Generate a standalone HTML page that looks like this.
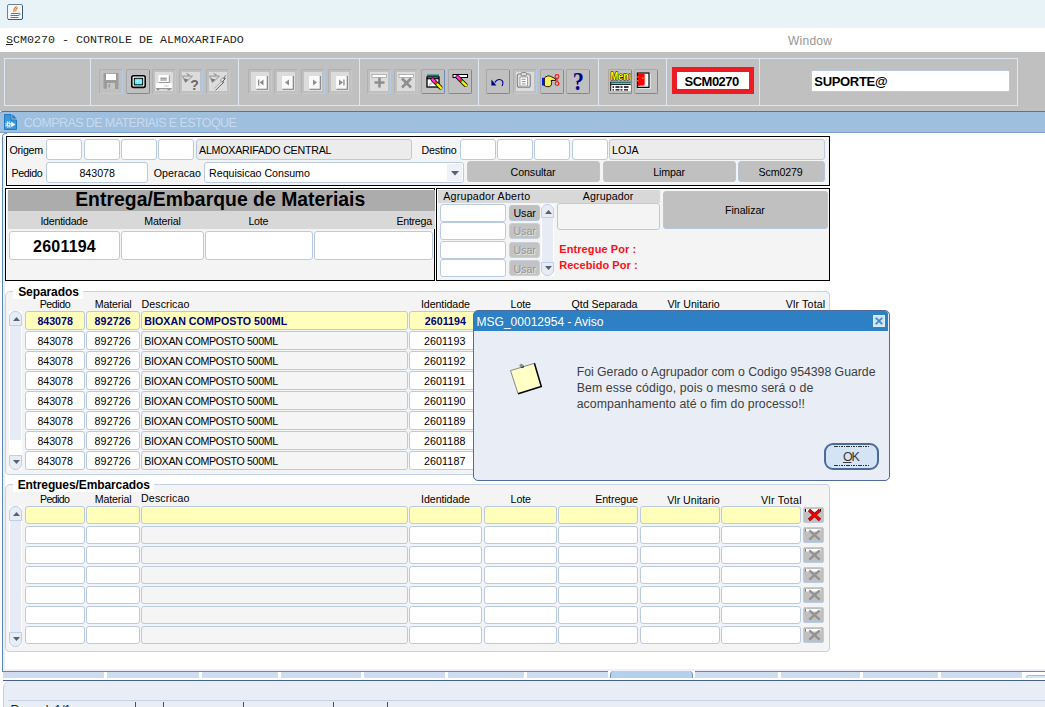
<!DOCTYPE html>
<html><head><meta charset="utf-8"><title>SCM0270 - CONTROLE DE ALMOXARIFADO</title>
<style>
*{box-sizing:border-box;margin:0;padding:0}
html,body{width:1045px;height:707px;overflow:hidden;background:#fff}
body{position:relative;font-family:"Liberation Sans",Arial,sans-serif;font-size:11px;color:#000}
div,span,svg{position:absolute}
.f{background:#fff;border:1px solid #b9cbe3;border-radius:3px}
.fg{background:#ececec;border:1px solid #b9cbe3;border-radius:3px}
.fy{background:#ffffbb;border:1px solid #bccbdc;border-radius:3px}
.btn{background:#c0c0c0;border:1px solid #b4c6de;border-radius:3px}
.tb{width:24px;height:25px;border:1px solid #a8b8d0;border-radius:2px;background:#c0c0c0}
.pnl{border:1px solid #dde7f3;top:58px;height:48px}
</style></head><body>

<div style="left:0px;top:0px;width:1045px;height:28px;background:#e7f3f6"></div>
<svg style="left:7px;top:4px" width="16" height="16" viewBox="0 0 16 16"><rect x="0.500" y="0.500" width="15" height="15" rx="1.500" fill="#f6f7f8" stroke="#6c8298"/><path d="M1 15.500h14M15.500 2v13" stroke="#3c5a78" stroke-width="1" fill="none"/><path d="M4 9.500h7.500M3.500 11.500h8M3.500 13.500h8" stroke="#41679a" stroke-width="0.900" fill="none"/><path d="M9.500 2.500c-2.500 1.800-3 3.500-2.500 5.500M10.500 3.500c-1.800 1.500-2.200 2.500-1.800 4" stroke="#e8761c" stroke-width="1.100" fill="none"/><path d="M11.500 9c2-.3 2 2.300-.3 2.300" stroke="#41679a" stroke-width="0.900" fill="none"/></svg>
<div style="left:0px;top:28px;width:1045px;height:24px;background:#fff"></div>
<div style="left:6px;top:33px;font-family:'Liberation Mono',monospace;font-size:11.67px;line-height:14px;white-space:pre;color:#222"><u>S</u>CM0270 - CONTROLE DE ALMOXARIFADO</div>
<span style="left:788.00px;top:34px;font-size:12px;line-height:15px;letter-spacing:0.256px;white-space:pre;color:#969696;">Window</span>
<div style="left:0px;top:52px;width:1045px;height:59px;background:#c0c0c0"></div>
<div class="pnl" style="left:4px;width:87px"></div>
<div class="pnl" style="left:90px;width:149px"></div>
<div class="pnl" style="left:238px;width:122px"></div>
<div class="pnl" style="left:359px;width:120px"></div>
<div class="pnl" style="left:478px;width:121px"></div>
<div class="pnl" style="left:598px;width:69px"></div>
<div class="pnl" style="left:666px;width:94px"></div>
<div class="pnl" style="left:759px;width:259px"></div>
<div class="tb" style="left:99px;top:69px;border-color:#b0b0b0 #b4ccec #b4ccec #b0b0b0"><svg style="left:-1px;top:-1px" width="24" height="25" viewBox="0 0 24 25"><path d="M4.500 4h15v16H6L4.500 18.500z" fill="#9c9c9c"/><rect x="7" y="5" width="10" height="6" fill="#fff"/><rect x="8" y="14" width="8" height="6" fill="#c6c6c6"/><rect x="9.500" y="15" width="1.600" height="3.500" fill="#9c9c9c"/><path d="M7 4.300h10M7 20h9" stroke="#c0c0c0" stroke-width="0.800" stroke-dasharray="1 1"/></svg></div>
<div class="tb" style="left:126px;top:69px;border-color:#a8a8a8 #6a8cb8 #6a8cb8 #a8a8a8"><svg style="left:-1px;top:-1px" width="24" height="25" viewBox="0 0 24 25"><rect x="5.800" y="6.800" width="13.400" height="11.600" rx="1.800" fill="#fff" stroke="#000" stroke-width="1.600"/><rect x="7.800" y="8.800" width="9.400" height="7.600" fill="#000"/><rect x="8.800" y="9.800" width="7.400" height="5.600" fill="#20e0f0"/><path d="M8.800 11.200h7.400M8.800 12.600h7.400M8.800 14h7.400" stroke="#e8ffff" stroke-width="0.600"/><path d="M10 9.800v5.600M11.500 9.800v5.600M13 9.800v5.600M14.500 9.800v5.600" stroke="#e8ffff" stroke-width="0.500" stroke-dasharray="0.700 0.700"/></svg></div>
<div class="tb" style="left:152px;top:69px;border-color:#b0b0b0 #b4ccec #b4ccec #b0b0b0"><div style="left:2px;top:2px;width:18px;height:19px;background:#dcdcdc"></div><svg style="left:-1px;top:-1px" width="24" height="25" viewBox="0 0 24 25"><rect x="6.500" y="6" width="10.800" height="7.300" fill="#fff"/><path d="M17.300 6.300v7.200H7" stroke="#8e8e8e" stroke-width="0.900" fill="none"/><path d="M8.300 9.200h6.500M8.300 11h6.500" stroke="#6a6a6a" stroke-width="0.900"/><rect x="4" y="14.200" width="15.800" height="5" fill="#fff"/><path d="M4 19.600h15.800" stroke="#8e8e8e" stroke-width="1"/><path d="M12.500 17h4" stroke="#8e8e8e" stroke-width="0.900" stroke-dasharray="1 0.600"/><path d="M5 20.600h2.200M15.500 20.600h2.800" stroke="#8e8e8e" stroke-width="1.100"/></svg></div>
<div class="tb" style="left:179px;top:69px;border-color:#b0b0b0 #b4ccec #b4ccec #b0b0b0"><div style="left:2px;top:2px;width:18px;height:19px;background:#dcdcdc"></div><svg style="left:-1px;top:-1px" width="24" height="25" viewBox="0 0 24 25"><path d="M3.500 7l10 .2-7 6.300z" fill="none" stroke="#8e8e8e" stroke-width="0.900"/><path d="M4.600 9.300l4.600 1.200-2.700 2.800z" fill="#7a7a7a"/><path d="M7.300 4.300l3.800 2M9 5v2" stroke="#8e8e8e" stroke-width="0.900"/><text x="11.300" y="21.300" font-family="Liberation Sans,sans-serif" font-weight="bold" font-size="14" fill="#6a6a6a">?</text></svg></div>
<div class="tb" style="left:206px;top:69px;border-color:#b0b0b0 #b4ccec #b4ccec #b0b0b0"><div style="left:2px;top:2px;width:18px;height:19px;background:#dcdcdc"></div><svg style="left:-1px;top:-1px" width="24" height="25" viewBox="0 0 24 25"><path d="M3.500 7l10 .2-7 6.300z" fill="none" stroke="#8e8e8e" stroke-width="0.900"/><path d="M4.600 9.300l4.600 1.200-2.700 2.800z" fill="#7a7a7a"/><path d="M7.300 4.300l3.800 2M9 5v2" stroke="#8e8e8e" stroke-width="0.900"/><path d="M17 8l-3 4h2l-8 7.500" stroke="#a8a8a8" stroke-width="0.900" fill="none"/><path d="M19.700 6.400l-2.200 3.100h2l-3.500 3.500h2l-8.500 8.400" stroke="#6a6a6a" stroke-width="1" fill="none"/></svg></div>
<div class="tb" style="left:248px;top:69px;border-color:#b0b0b0 #b4ccec #b4ccec #b0b0b0"><div style="left:2px;top:2px;width:18px;height:19px;background:#dcdcdc"></div><svg style="left:-1px;top:-1px" width="24" height="25" viewBox="0 0 24 25"><rect x="8" y="7" width="11" height="13" fill="#fafafa"/><path d="M19.300 7v13.300H8.500" stroke="#7c7c7c" stroke-width="1.100" fill="none"/><rect x="10" y="10.500" width="1.300" height="6" fill="#8e8e8e"/><path d="M15.500 10.500v6l-4-3z" fill="#8e8e8e"/></svg></div>
<div class="tb" style="left:274px;top:69px;border-color:#b0b0b0 #b4ccec #b4ccec #b0b0b0"><div style="left:2px;top:2px;width:18px;height:19px;background:#dcdcdc"></div><svg style="left:-1px;top:-1px" width="24" height="25" viewBox="0 0 24 25"><rect x="8" y="7" width="11" height="13" fill="#fafafa"/><path d="M19.300 7v13.300H8.500" stroke="#7c7c7c" stroke-width="1.100" fill="none"/><path d="M15 10.500v6l-4-3z" fill="#8e8e8e"/></svg></div>
<div class="tb" style="left:301px;top:69px;border-color:#b0b0b0 #b4ccec #b4ccec #b0b0b0"><div style="left:2px;top:2px;width:18px;height:19px;background:#dcdcdc"></div><svg style="left:-1px;top:-1px" width="24" height="25" viewBox="0 0 24 25"><rect x="8" y="7" width="11" height="13" fill="#fafafa"/><path d="M19.300 7v13.300H8.500" stroke="#7c7c7c" stroke-width="1.100" fill="none"/><path d="M12 10.500v6l4-3z" fill="#8e8e8e"/></svg></div>
<div class="tb" style="left:328px;top:69px;border-color:#b0b0b0 #b4ccec #b4ccec #b0b0b0"><div style="left:2px;top:2px;width:18px;height:19px;background:#dcdcdc"></div><svg style="left:-1px;top:-1px" width="24" height="25" viewBox="0 0 24 25"><rect x="8" y="7" width="11" height="13" fill="#fafafa"/><path d="M19.300 7v13.300H8.500" stroke="#7c7c7c" stroke-width="1.100" fill="none"/><path d="M11 10.500v6l4-3z" fill="#8e8e8e"/><rect x="15.300" y="10.500" width="1.300" height="6" fill="#8e8e8e"/></svg></div>
<div class="tb" style="left:367px;top:69px;border-color:#b0b0b0 #b4ccec #b4ccec #b0b0b0"><div style="left:2px;top:2px;width:18px;height:19px;background:#dcdcdc"></div><svg style="left:-1px;top:-1px" width="24" height="25" viewBox="0 0 24 25"><rect x="5" y="5.500" width="14.500" height="3" fill="#fff" stroke="#8e8e8e" stroke-width="0.600"/><path d="M12.500 8.500v10M7.500 13.500h10" stroke="#8e8e8e" stroke-width="2.600"/></svg></div>
<div class="tb" style="left:394px;top:69px;border-color:#b0b0b0 #b4ccec #b4ccec #b0b0b0"><div style="left:2px;top:2px;width:18px;height:19px;background:#dcdcdc"></div><svg style="left:-1px;top:-1px" width="24" height="25" viewBox="0 0 24 25"><rect x="5" y="5.500" width="14.500" height="3" fill="#fff" stroke="#8e8e8e" stroke-width="0.600"/><path d="M8 9.500l9 9M17 9.500l-9 9" stroke="#8e8e8e" stroke-width="2.600"/></svg></div>
<div class="tb" style="left:421px;top:69px;border-color:#a8a8a8 #6a8cb8 #6a8cb8 #a8a8a8"><svg style="left:-1px;top:-1px" width="24" height="25" viewBox="0 0 24 25"><rect x="6" y="5.500" width="12" height="2" fill="#008080"/><rect x="6" y="8" width="12" height="10" fill="#fff" stroke="#000" stroke-width="1.300"/><path d="M6 9.700h12" stroke="#000" stroke-width="1.200"/><path d="M7.500 17.500a4 4 0 0 1 5-4" fill="#c0c0c0" stroke="none"/><g transform="translate(11.5,10.5)"><path d="M0 0l8 8" stroke="#000" stroke-width="4" stroke-linecap="round"/><path d="M0 0l2.200 2.200" stroke="#ff30d0" stroke-width="2.700" stroke-linecap="round"/><path d="M2.400 2.400l1.400 1.400" stroke="#ff2020" stroke-width="2.700"/><path d="M3.800 3.800l1.600 1.600" stroke="#10c010" stroke-width="2.700"/><path d="M5.400 5.400l3 3" stroke="#f8f000" stroke-width="2.700" stroke-linecap="round"/></g></svg></div>
<div class="tb" style="left:448px;top:69px;border-color:#a8a8a8 #6a8cb8 #6a8cb8 #a8a8a8"><svg style="left:-1px;top:-1px" width="24" height="25" viewBox="0 0 24 25"><rect x="5" y="5.500" width="14.500" height="3" fill="#fff" stroke="#000" stroke-width="1"/><g transform="translate(9.5,8)"><path d="M0 0l8 8" stroke="#000" stroke-width="4" stroke-linecap="round"/><path d="M0 0l2.200 2.200" stroke="#ff30d0" stroke-width="2.700" stroke-linecap="round"/><path d="M2.400 2.400l1.400 1.400" stroke="#ff2020" stroke-width="2.700"/><path d="M3.800 3.800l1.600 1.600" stroke="#10c010" stroke-width="2.700"/><path d="M5.400 5.400l3 3" stroke="#f8f000" stroke-width="2.700" stroke-linecap="round"/></g></svg></div>
<div class="tb" style="left:486px;top:69px;border-color:#a8a8a8 #6a8cb8 #6a8cb8 #a8a8a8"><svg style="left:-1px;top:-1px" width="24" height="25" viewBox="0 0 24 25"><path d="M5.400 10.600v5.800h5z" fill="#00008c"/><path d="M8.800 13.400c1.400-2.200 2.800-3 4.600-2.900c2.300.2 3.700 1.800 3.500 3.800c-.1.900-.4 1.700-.9 2.600" stroke="#00008c" stroke-width="1.100" fill="none"/></svg></div>
<div class="tb" style="left:513px;top:69px;border-color:#b0b0b0 #b4ccec #b4ccec #b0b0b0"><div style="left:2px;top:2px;width:18px;height:19px;background:#dcdcdc"></div><svg style="left:-1px;top:-1px" width="24" height="25" viewBox="0 0 24 25"><rect x="4.300" y="5" width="13" height="13.300" rx="2" fill="#e2e2e2" stroke="#808080" stroke-width="1.100"/><rect x="7" y="8" width="7.500" height="9" fill="#fff" stroke="#808080" stroke-width="0.700"/><rect x="8" y="3.600" width="5.500" height="3.200" rx="1.200" fill="#e2e2e2" stroke="#808080" stroke-width="1"/><path d="M8.800 10.300h3.800M8.800 12.600h3.800M8.800 14.900h3.800" stroke="#808080" stroke-width="0.900"/></svg></div>
<div class="tb" style="left:540px;top:69px;border-color:#a8a8a8 #6a8cb8 #6a8cb8 #a8a8a8"><svg style="left:-1px;top:-1px" width="24" height="25" viewBox="0 0 24 25"><rect x="2" y="8.800" width="2.400" height="7.700" fill="#0020e0"/><path d="M4.400 9c2-2 4-2.700 6-1.700l5.200 2.500v1.600l-4.500 .1c1.200 2 .7 5.600-1.800 6.100c-2 .4-3.600-.3-4.900-.9z" fill="#f8ec50" stroke="#000" stroke-width="0.900"/><path d="M6 11h5M6 13h5M6 15h4" stroke="#fff" stroke-width="0.600" stroke-dasharray="0.800 0.800"/><circle cx="17" cy="7.500" r="1.900" fill="none" stroke="#ff1010" stroke-width="1.100"/><circle cx="17" cy="14.600" r="1.900" fill="none" stroke="#ff1010" stroke-width="1.100"/><path d="M16 9.300l1.800 3.500M18 9.300l-1.800 3.500" stroke="#ff1010" stroke-width="0.800"/></svg></div>
<div class="tb" style="left:566px;top:69px;border-color:#a8a8a8 #6a8cb8 #6a8cb8 #a8a8a8"><svg style="left:-1px;top:-1px" width="24" height="25" viewBox="0 0 24 25"><text transform="translate(6.800,21.200) scale(0.860,1)" font-family="Liberation Serif,serif" font-weight="bold" font-size="26" fill="#000088">?</text></svg></div>
<div class="tb" style="left:608px;top:69px;border-color:#a8a8a8 #6a8cb8 #6a8cb8 #a8a8a8"><svg style="left:-1px;top:-1px" width="24" height="25" viewBox="0 0 24 25"><svg x="0" y="0" width="22.700" height="25"><text x="2.400" y="11.200" font-family="Liberation Sans,sans-serif" font-weight="bold" font-size="11" fill="#ffff00" stroke="#000" stroke-width="1.100" paint-order="stroke" textLength="24" lengthAdjust="spacingAndGlyphs">Menu</text><rect x="2.500" y="12.800" width="21" height="0.900" fill="#000"/><rect x="3" y="13.700" width="21" height="1.500" fill="#00e8f8"/><rect x="2.500" y="15.200" width="21" height="0.800" fill="#000"/><rect x="3" y="16" width="21" height="6" fill="#fff"/><rect x="2.300" y="12.800" width="0.900" height="9.200" fill="#000"/><path d="M4.500 18h1.500M7.500 18h4M12.500 18h2M16 18h4.500M4.500 20.800h1.500M7.500 20.800h4M12.500 20.800h2M16 20.800h4" stroke="#000" stroke-width="1.300"/></svg></svg></div>
<div class="tb" style="left:634px;top:69px;border-color:#a8a8a8 #6a8cb8 #6a8cb8 #a8a8a8"><svg style="left:-1px;top:-1px" width="24" height="25" viewBox="0 0 24 25"><rect x="3.800" y="18.600" width="12.600" height="1" fill="#fff"/><rect x="15.500" y="4.500" width="1" height="15" fill="#fff"/><rect x="3.400" y="4" width="11.600" height="14.400" fill="#d8d8d8" stroke="#000" stroke-width="1.100"/><rect x="11.500" y="5" width="2.500" height="11.500" fill="#fff"/><path d="M4 4.600h6.600v10.600l-1.200 1.200h-3.500l-0.600 0.600h-1.300z" fill="#ff0000"/><rect x="8.200" y="8.500" width="1.300" height="1.300" fill="#ffe800"/><path d="M3 8h1.300M3 11.800h1.300" stroke="#ffe800" stroke-width="0.900"/></svg></div>
<div style="left:672px;top:67px;width:82px;height:27px;background:#fff;border:5px solid #ed1c24"></div>
<span style="left:684.60px;top:74px;font-size:13px;line-height:16px;letter-spacing:-0.531px;white-space:pre;font-weight:bold;">SCM0270</span>
<div class="f" style="left:811px;top:70px;width:199px;height:22px;border-color:#b9cbe3;border-radius:2px"></div>
<span style="left:814.30px;top:74px;font-size:13px;line-height:16px;letter-spacing:-0.319px;white-space:pre;font-weight:bold;">SUPORTE@</span>
<div style="left:0px;top:111px;width:1045px;height:22px;background:#9fbfdf;border-top:1px solid #4f74a6;border-bottom:1px solid #7d9fca;border-top-left-radius:3px"></div>
<svg style="left:4px;top:114px" width="13" height="16" viewBox="0 0 13 16"><path d="M0.500 0.500h6.500v5.500h5.500v9.500h-12z" fill="#3a97da" stroke="#1f7bc0"/><path d="M8.300 0.300v4.200h4.400z" fill="#1f7bc0"/><circle cx="4.500" cy="10.500" r="2.700" fill="none" stroke="#fff" stroke-width="1.300" stroke-dasharray="1.100 1.020"/><circle cx="4.500" cy="10.500" r="1.900" fill="#fff"/><circle cx="4.700" cy="10.500" r="0.900" fill="#3a97da"/><path d="M7.300 7.800l4 2.700-4 2.700z" fill="#fff"/></svg>
<span style="left:23.85px;top:115px;font-size:12.5px;line-height:16px;letter-spacing:-0.592px;white-space:pre;color:#c6daef;">COMPRAS DE MATERIAIS E ESTOQUE</span>
<div style="left:2px;top:133px;width:5px;height:5px;border:1px solid #6f92c2;border-right:0;border-bottom:0;border-radius:4px 0 0 0"></div>
<div style="left:2px;top:137px;width:1px;height:535px;background:#5f86b8"></div>
<div style="left:3px;top:135px;width:2px;height:534px;background:#e9eff7"></div>
<div style="left:6px;top:136px;width:824px;height:50px;background:#f4f4f4;border:1px solid #000;box-shadow:inset 1px 1px 0 #fff"></div>
<span style="left:9.40px;top:144px;font-size:10.67px;line-height:13px;letter-spacing:-0.240px;white-space:pre;">Origem</span>
<div class="f" style="left:46px;top:139px;width:36px;height:21px;"></div>
<div class="f" style="left:84px;top:139px;width:36px;height:21px;"></div>
<div class="f" style="left:121px;top:139px;width:36px;height:21px;"></div>
<div class="f" style="left:158px;top:139px;width:36px;height:21px;"></div>
<div class="fg" style="left:196px;top:139px;width:216px;height:21px;"></div>
<span style="left:199.00px;top:144px;font-size:10.67px;line-height:13px;letter-spacing:-0.224px;white-space:pre;">ALMOXARIFADO CENTRAL</span>
<span style="left:421.50px;top:144px;font-size:10.67px;line-height:13px;letter-spacing:-0.179px;white-space:pre;">Destino</span>
<div class="f" style="left:460px;top:139px;width:36px;height:21px;"></div>
<div class="f" style="left:497px;top:139px;width:36px;height:21px;"></div>
<div class="f" style="left:534px;top:139px;width:36px;height:21px;"></div>
<div class="f" style="left:572px;top:139px;width:36px;height:21px;"></div>
<div class="fg" style="left:609px;top:139px;width:216px;height:21px;"></div>
<span style="left:612.00px;top:144px;font-size:10.67px;line-height:13px;letter-spacing:-0.043px;white-space:pre;">LOJA</span>
<span style="left:11.50px;top:167px;font-size:10.67px;line-height:13px;letter-spacing:-0.387px;white-space:pre;">Pedido</span>
<div class="f" style="left:46px;top:162px;width:102px;height:21px;"></div>
<span style="left:79.40px;top:167px;font-size:10.67px;line-height:13px;letter-spacing:0.003px;white-space:pre;">843078</span>
<span style="left:153.70px;top:167px;font-size:10.67px;line-height:13px;letter-spacing:0.066px;white-space:pre;">Operacao</span>
<div class="f" style="left:204px;top:162px;width:260px;height:21px;"><div style="right:1px;top:1px;width:15px;height:17px;background:#eef1f8"></div><svg style="right:4px;top:8px" width="8" height="5"><path d="M0 0h8l-4 4.500z" fill="#5a5f73"/></svg></div>
<span style="left:209.10px;top:167px;font-size:10.67px;line-height:13px;letter-spacing:-0.030px;white-space:pre;">Requisicao Consumo</span>
<div class="btn" style="left:467px;top:161px;width:133px;height:21px;"></div>
<span style="left:510.50px;top:166px;font-size:10.67px;line-height:13px;letter-spacing:-0.058px;white-space:pre;">Consultar</span>
<div class="btn" style="left:603px;top:161px;width:133px;height:21px;"></div>
<span style="left:653.30px;top:166px;font-size:10.67px;line-height:13px;letter-spacing:-0.179px;white-space:pre;">Limpar</span>
<div class="btn" style="left:738px;top:161px;width:87px;height:21px;"></div>
<span style="left:758.50px;top:166px;font-size:10.67px;line-height:13px;letter-spacing:-0.130px;white-space:pre;">Scm0279</span>
<div style="left:5px;top:188px;width:430px;height:93px;background:#f4f4f4;border:1px solid #000;box-shadow:inset 1px 1px 0 #fff"></div>
<div style="left:8px;top:190px;width:427px;height:21px;background:#acacac"></div>
<div style="left:8px;top:211px;width:427px;height:18px;background:#d8d8d8"></div>
<span style="left:75.20px;top:188px;font-size:19.33px;line-height:24px;letter-spacing:0.040px;white-space:pre;font-weight:bold;">Entrega/Embarque de Materiais</span>
<span style="left:40.40px;top:215px;font-size:10.67px;line-height:13px;letter-spacing:-0.248px;white-space:pre;">Identidade</span>
<span style="left:144.20px;top:215px;font-size:10.67px;line-height:13px;letter-spacing:-0.162px;white-space:pre;">Material</span>
<span style="left:248.40px;top:215px;font-size:10.67px;line-height:13px;letter-spacing:-0.251px;white-space:pre;">Lote</span>
<span style="left:396.40px;top:215px;font-size:10.67px;line-height:13px;letter-spacing:-0.266px;white-space:pre;">Entrega</span>
<div class="f" style="left:9px;top:231px;width:111px;height:29px;"></div>
<span style="left:33.10px;top:237px;font-size:16px;line-height:20px;letter-spacing:0.210px;white-space:pre;font-weight:bold;">2601194</span>
<div class="f" style="left:121px;top:231px;width:83px;height:29px;"></div>
<div class="f" style="left:205px;top:231px;width:108px;height:29px;"></div>
<div class="f" style="left:314px;top:231px;width:119px;height:29px;"></div>
<div style="left:436px;top:188px;width:394px;height:93px;background:#f4f4f4;border:1px solid #000;box-shadow:inset 1px 1px 0 #fff"></div>
<div style="left:438px;top:190px;width:222px;height:13px;background:#d8d8d8"></div>
<span style="left:443.30px;top:190px;font-size:10.67px;line-height:13px;letter-spacing:0.216px;white-space:pre;">Agrupador Aberto</span>
<span style="left:582.80px;top:190px;font-size:10.67px;line-height:13px;letter-spacing:0.096px;white-space:pre;">Agrupador</span>
<div class="f" style="left:440px;top:204px;width:66px;height:18px;"></div>
<div class="btn" style="left:509px;top:205px;width:31px;height:16px;background:#c0c0c0"></div>
<span style="left:513.50px;top:207px;font-size:10.67px;line-height:13px;letter-spacing:-0.071px;white-space:pre;">Usar</span>
<div class="f" style="left:440px;top:222px;width:66px;height:18px;"></div>
<div class="btn" style="left:509px;top:223px;width:31px;height:16px;background:#c3c3c3;border-color:#c6d0de"></div>
<span style="left:513.50px;top:225px;font-size:10.67px;line-height:13px;letter-spacing:-0.071px;white-space:pre;color:#969696;text-shadow:1px 1px 0 #e6e6e6;">Usar</span>
<div class="f" style="left:440px;top:241px;width:66px;height:18px;"></div>
<div class="btn" style="left:509px;top:242px;width:31px;height:16px;background:#c3c3c3;border-color:#c6d0de"></div>
<span style="left:513.50px;top:244px;font-size:10.67px;line-height:13px;letter-spacing:-0.071px;white-space:pre;color:#969696;text-shadow:1px 1px 0 #e6e6e6;">Usar</span>
<div class="f" style="left:440px;top:259px;width:66px;height:18px;"></div>
<div class="btn" style="left:509px;top:260px;width:31px;height:16px;background:#c3c3c3;border-color:#c6d0de"></div>
<span style="left:513.50px;top:263px;font-size:10.67px;line-height:13px;letter-spacing:-0.071px;white-space:pre;color:#969696;text-shadow:1px 1px 0 #e6e6e6;">Usar</span>
<div style="left:541px;top:204px;width:13px;height:72px;background:#fff"></div><div style="left:542px;top:218px;width:11px;height:44px;background:#e6ebf5"></div><div style="left:541px;top:204px;width:13px;height:14px;background:#e8ecf5;border:1px solid #bfcfe7;border-radius:6px 6px 0 0"></div><div style="left:541px;top:262px;width:13px;height:14px;background:#e8ecf5;border:1px solid #bfcfe7;border-radius:0 0 6px 6px"></div><svg style="left:544.5px;top:210px" width="7" height="4"><path d="M0 4h7l-3.500-4z" fill="#5a5f73"/></svg><svg style="left:544.5px;top:266px" width="7" height="4"><path d="M0 0h7l-3.500 4z" fill="#5a5f73"/></svg>
<div class="f" style="left:557px;top:203px;width:103px;height:27px;background:#f4f4f4"></div>
<div class="btn" style="left:663px;top:191px;width:165px;height:38px;"></div>
<span style="left:725.10px;top:204px;font-size:10.67px;line-height:13px;letter-spacing:-0.067px;white-space:pre;">Finalizar</span>
<span style="left:559.20px;top:242px;font-size:11px;line-height:14px;letter-spacing:0.101px;white-space:pre;font-weight:bold;color:#fa0f19;">Entregue Por :</span>
<span style="left:559.20px;top:258px;font-size:11px;line-height:14px;letter-spacing:0.061px;white-space:pre;font-weight:bold;color:#fa0f19;">Recebido Por :</span>
<div style="left:5px;top:291px;width:825px;height:184px;border:1px solid #c3d2e8;border-radius:5px 4px 4px 4px;background:#f4f4f4"></div><div style="left:13px;top:286px;width:70px;height:13px;background:#fff"></div>
<span style="left:18.20px;top:285px;font-size:12px;line-height:15px;letter-spacing:-0.085px;white-space:pre;font-weight:bold;">Separados</span>
<div style="left:9px;top:311px;width:13px;height:159px;background:#fff"></div><div style="left:10px;top:326px;width:11px;height:114px;background:#e6ebf5"></div><div style="left:9px;top:311px;width:13px;height:15px;background:#e8ecf5;border:1px solid #bfcfe7;border-radius:6px 6px 0 0"></div><div style="left:9px;top:455px;width:13px;height:15px;background:#e8ecf5;border:1px solid #bfcfe7;border-radius:0 0 6px 6px"></div><svg style="left:12.5px;top:317px" width="7" height="4"><path d="M0 4h7l-3.500-4z" fill="#5a5f73"/></svg><svg style="left:12.5px;top:460px" width="7" height="4"><path d="M0 0h7l-3.500 4z" fill="#5a5f73"/></svg>
<span style="left:39.70px;top:298px;font-size:10.67px;line-height:13px;letter-spacing:-0.427px;white-space:pre;">Pedido</span>
<span style="left:94.70px;top:298px;font-size:10.67px;line-height:13px;letter-spacing:-0.147px;white-space:pre;">Material</span>
<span style="left:141.50px;top:298px;font-size:10.67px;line-height:13px;letter-spacing:0.071px;white-space:pre;">Descricao</span>
<span style="left:421.00px;top:298px;font-size:10.67px;line-height:13px;letter-spacing:-0.092px;white-space:pre;">Identidade</span>
<span style="left:510.60px;top:298px;font-size:10.67px;line-height:13px;letter-spacing:-0.118px;white-space:pre;">Lote</span>
<span style="left:571.60px;top:298px;font-size:10.67px;line-height:13px;letter-spacing:-0.043px;white-space:pre;">Qtd Separada</span>
<span style="left:667.40px;top:298px;font-size:10.67px;line-height:13px;letter-spacing:-0.033px;white-space:pre;">Vlr Unitario</span>
<span style="left:785.70px;top:298px;font-size:10.67px;line-height:13px;letter-spacing:0.155px;white-space:pre;">Vlr Total</span>
<div class="fy" style="left:25px;top:311px;width:60px;height:19px;"></div>
<div class="fy" style="left:86px;top:311px;width:54px;height:19px;"></div>
<div class="fy" style="left:141px;top:311px;width:267px;height:19px;"></div>
<div class="fy" style="left:409px;top:311px;width:73px;height:19px;"></div>
<div class="fy" style="left:484px;top:311px;width:73px;height:19px;"></div>
<div class="fy" style="left:558px;top:311px;width:80px;height:19px;"></div>
<div class="fy" style="left:640px;top:311px;width:80px;height:19px;"></div>
<div class="fy" style="left:721px;top:311px;width:104px;height:19px;"></div>
<span style="left:37.40px;top:315px;font-size:10.67px;line-height:13px;letter-spacing:-0.017px;white-space:pre;font-weight:bold;color:#00007a;">843078</span>
<span style="left:94.60px;top:315px;font-size:10.67px;line-height:13px;letter-spacing:0.103px;white-space:pre;font-weight:bold;color:#00007a;">892726</span>
<span style="left:144.30px;top:315px;font-size:10.67px;line-height:13px;letter-spacing:0.024px;white-space:pre;font-weight:bold;color:#00007a;">BIOXAN COMPOSTO 500ML</span>
<span style="left:424.80px;top:315px;font-size:10.67px;line-height:13px;letter-spacing:0.021px;white-space:pre;font-weight:bold;color:#00007a;">2601194</span>
<div class="f" style="left:25px;top:331px;width:60px;height:19px;"></div>
<div class="f" style="left:86px;top:331px;width:54px;height:19px;"></div>
<div class="fg" style="left:141px;top:331px;width:267px;height:19px;background:#f5f5f5"></div>
<div class="f" style="left:409px;top:331px;width:73px;height:19px;"></div>
<div class="f" style="left:484px;top:331px;width:73px;height:19px;"></div>
<div class="f" style="left:558px;top:331px;width:80px;height:19px;"></div>
<div class="f" style="left:640px;top:331px;width:80px;height:19px;"></div>
<div class="f" style="left:721px;top:331px;width:104px;height:19px;"></div>
<span style="left:37.40px;top:335px;font-size:10.67px;line-height:13px;letter-spacing:-0.017px;white-space:pre;">843078</span>
<span style="left:94.60px;top:335px;font-size:10.67px;line-height:13px;letter-spacing:0.103px;white-space:pre;">892726</span>
<span style="left:144.30px;top:335px;font-size:10.67px;line-height:13px;letter-spacing:-0.343px;white-space:pre;">BIOXAN COMPOSTO 500ML</span>
<span style="left:424.00px;top:335px;font-size:10.67px;line-height:13px;letter-spacing:0.107px;white-space:pre;">2601193</span>
<div class="f" style="left:25px;top:351px;width:60px;height:19px;"></div>
<div class="f" style="left:86px;top:351px;width:54px;height:19px;"></div>
<div class="fg" style="left:141px;top:351px;width:267px;height:19px;background:#f5f5f5"></div>
<div class="f" style="left:409px;top:351px;width:73px;height:19px;"></div>
<div class="f" style="left:484px;top:351px;width:73px;height:19px;"></div>
<div class="f" style="left:558px;top:351px;width:80px;height:19px;"></div>
<div class="f" style="left:640px;top:351px;width:80px;height:19px;"></div>
<div class="f" style="left:721px;top:351px;width:104px;height:19px;"></div>
<span style="left:37.40px;top:355px;font-size:10.67px;line-height:13px;letter-spacing:-0.017px;white-space:pre;">843078</span>
<span style="left:94.60px;top:355px;font-size:10.67px;line-height:13px;letter-spacing:0.103px;white-space:pre;">892726</span>
<span style="left:144.30px;top:355px;font-size:10.67px;line-height:13px;letter-spacing:-0.343px;white-space:pre;">BIOXAN COMPOSTO 500ML</span>
<span style="left:424.00px;top:355px;font-size:10.67px;line-height:13px;letter-spacing:0.107px;white-space:pre;">2601192</span>
<div class="f" style="left:25px;top:371px;width:60px;height:19px;"></div>
<div class="f" style="left:86px;top:371px;width:54px;height:19px;"></div>
<div class="fg" style="left:141px;top:371px;width:267px;height:19px;background:#f5f5f5"></div>
<div class="f" style="left:409px;top:371px;width:73px;height:19px;"></div>
<div class="f" style="left:484px;top:371px;width:73px;height:19px;"></div>
<div class="f" style="left:558px;top:371px;width:80px;height:19px;"></div>
<div class="f" style="left:640px;top:371px;width:80px;height:19px;"></div>
<div class="f" style="left:721px;top:371px;width:104px;height:19px;"></div>
<span style="left:37.40px;top:375px;font-size:10.67px;line-height:13px;letter-spacing:-0.017px;white-space:pre;">843078</span>
<span style="left:94.60px;top:375px;font-size:10.67px;line-height:13px;letter-spacing:0.103px;white-space:pre;">892726</span>
<span style="left:144.30px;top:375px;font-size:10.67px;line-height:13px;letter-spacing:-0.343px;white-space:pre;">BIOXAN COMPOSTO 500ML</span>
<span style="left:424.00px;top:375px;font-size:10.67px;line-height:13px;letter-spacing:0.107px;white-space:pre;">2601191</span>
<div class="f" style="left:25px;top:391px;width:60px;height:19px;"></div>
<div class="f" style="left:86px;top:391px;width:54px;height:19px;"></div>
<div class="fg" style="left:141px;top:391px;width:267px;height:19px;background:#f5f5f5"></div>
<div class="f" style="left:409px;top:391px;width:73px;height:19px;"></div>
<div class="f" style="left:484px;top:391px;width:73px;height:19px;"></div>
<div class="f" style="left:558px;top:391px;width:80px;height:19px;"></div>
<div class="f" style="left:640px;top:391px;width:80px;height:19px;"></div>
<div class="f" style="left:721px;top:391px;width:104px;height:19px;"></div>
<span style="left:37.40px;top:395px;font-size:10.67px;line-height:13px;letter-spacing:-0.017px;white-space:pre;">843078</span>
<span style="left:94.60px;top:395px;font-size:10.67px;line-height:13px;letter-spacing:0.103px;white-space:pre;">892726</span>
<span style="left:144.30px;top:395px;font-size:10.67px;line-height:13px;letter-spacing:-0.343px;white-space:pre;">BIOXAN COMPOSTO 500ML</span>
<span style="left:424.00px;top:395px;font-size:10.67px;line-height:13px;letter-spacing:0.107px;white-space:pre;">2601190</span>
<div class="f" style="left:25px;top:411px;width:60px;height:19px;"></div>
<div class="f" style="left:86px;top:411px;width:54px;height:19px;"></div>
<div class="fg" style="left:141px;top:411px;width:267px;height:19px;background:#f5f5f5"></div>
<div class="f" style="left:409px;top:411px;width:73px;height:19px;"></div>
<div class="f" style="left:484px;top:411px;width:73px;height:19px;"></div>
<div class="f" style="left:558px;top:411px;width:80px;height:19px;"></div>
<div class="f" style="left:640px;top:411px;width:80px;height:19px;"></div>
<div class="f" style="left:721px;top:411px;width:104px;height:19px;"></div>
<span style="left:37.40px;top:415px;font-size:10.67px;line-height:13px;letter-spacing:-0.017px;white-space:pre;">843078</span>
<span style="left:94.60px;top:415px;font-size:10.67px;line-height:13px;letter-spacing:0.103px;white-space:pre;">892726</span>
<span style="left:144.30px;top:415px;font-size:10.67px;line-height:13px;letter-spacing:-0.343px;white-space:pre;">BIOXAN COMPOSTO 500ML</span>
<span style="left:424.00px;top:415px;font-size:10.67px;line-height:13px;letter-spacing:0.107px;white-space:pre;">2601189</span>
<div class="f" style="left:25px;top:431px;width:60px;height:19px;"></div>
<div class="f" style="left:86px;top:431px;width:54px;height:19px;"></div>
<div class="fg" style="left:141px;top:431px;width:267px;height:19px;background:#f5f5f5"></div>
<div class="f" style="left:409px;top:431px;width:73px;height:19px;"></div>
<div class="f" style="left:484px;top:431px;width:73px;height:19px;"></div>
<div class="f" style="left:558px;top:431px;width:80px;height:19px;"></div>
<div class="f" style="left:640px;top:431px;width:80px;height:19px;"></div>
<div class="f" style="left:721px;top:431px;width:104px;height:19px;"></div>
<span style="left:37.40px;top:435px;font-size:10.67px;line-height:13px;letter-spacing:-0.017px;white-space:pre;">843078</span>
<span style="left:94.60px;top:435px;font-size:10.67px;line-height:13px;letter-spacing:0.103px;white-space:pre;">892726</span>
<span style="left:144.30px;top:435px;font-size:10.67px;line-height:13px;letter-spacing:-0.343px;white-space:pre;">BIOXAN COMPOSTO 500ML</span>
<span style="left:424.00px;top:435px;font-size:10.67px;line-height:13px;letter-spacing:0.107px;white-space:pre;">2601188</span>
<div class="f" style="left:25px;top:451px;width:60px;height:19px;"></div>
<div class="f" style="left:86px;top:451px;width:54px;height:19px;"></div>
<div class="fg" style="left:141px;top:451px;width:267px;height:19px;background:#f5f5f5"></div>
<div class="f" style="left:409px;top:451px;width:73px;height:19px;"></div>
<div class="f" style="left:484px;top:451px;width:73px;height:19px;"></div>
<div class="f" style="left:558px;top:451px;width:80px;height:19px;"></div>
<div class="f" style="left:640px;top:451px;width:80px;height:19px;"></div>
<div class="f" style="left:721px;top:451px;width:104px;height:19px;"></div>
<span style="left:37.40px;top:455px;font-size:10.67px;line-height:13px;letter-spacing:-0.017px;white-space:pre;">843078</span>
<span style="left:94.60px;top:455px;font-size:10.67px;line-height:13px;letter-spacing:0.103px;white-space:pre;">892726</span>
<span style="left:144.30px;top:455px;font-size:10.67px;line-height:13px;letter-spacing:-0.343px;white-space:pre;">BIOXAN COMPOSTO 500ML</span>
<span style="left:424.00px;top:455px;font-size:10.67px;line-height:13px;letter-spacing:0.107px;white-space:pre;">2601187</span>
<div style="left:5px;top:484px;width:825px;height:168px;border:1px solid #c3d2e8;border-radius:5px 4px 4px 4px;background:#f4f4f4"></div><div style="left:13px;top:479px;width:141px;height:13px;background:#fff"></div>
<span style="left:17.70px;top:478px;font-size:12px;line-height:15px;letter-spacing:-0.097px;white-space:pre;font-weight:bold;">Entregues/Embarcados</span>
<div style="left:9px;top:506px;width:13px;height:141px;background:#fff"></div><div style="left:10px;top:521px;width:11px;height:111px;background:#e6ebf5"></div><div style="left:9px;top:506px;width:13px;height:15px;background:#e8ecf5;border:1px solid #bfcfe7;border-radius:6px 6px 0 0"></div><div style="left:9px;top:632px;width:13px;height:15px;background:#e8ecf5;border:1px solid #bfcfe7;border-radius:0 0 6px 6px"></div><svg style="left:12.5px;top:512px" width="7" height="4"><path d="M0 4h7l-3.500-4z" fill="#5a5f73"/></svg><svg style="left:12.5px;top:637px" width="7" height="4"><path d="M0 0h7l-3.500 4z" fill="#5a5f73"/></svg>
<span style="left:40.00px;top:493px;font-size:10.67px;line-height:13px;letter-spacing:-0.627px;white-space:pre;">Pedido</span>
<span style="left:94.70px;top:493px;font-size:10.67px;line-height:13px;letter-spacing:-0.147px;white-space:pre;">Material</span>
<span style="left:141.00px;top:492px;font-size:10.67px;line-height:13px;letter-spacing:0.134px;white-space:pre;">Descricao</span>
<span style="left:421.10px;top:493px;font-size:10.67px;line-height:13px;letter-spacing:-0.092px;white-space:pre;">Identidade</span>
<span style="left:510.60px;top:493px;font-size:10.67px;line-height:13px;letter-spacing:-0.118px;white-space:pre;">Lote</span>
<span style="left:595.20px;top:493px;font-size:10.67px;line-height:13px;letter-spacing:-0.074px;white-space:pre;">Entregue</span>
<span style="left:667.20px;top:494px;font-size:10.67px;line-height:13px;letter-spacing:-0.015px;white-space:pre;">Vlr Unitario</span>
<span style="left:760.90px;top:494px;font-size:10.67px;line-height:13px;letter-spacing:0.293px;white-space:pre;">Vlr Total</span>
<div class="fy" style="left:25px;top:506px;width:60px;height:18px;"></div>
<div class="fy" style="left:86px;top:506px;width:54px;height:18px;"></div>
<div class="fy" style="left:141px;top:506px;width:267px;height:18px;"></div>
<div class="fy" style="left:409px;top:506px;width:73px;height:18px;"></div>
<div class="fy" style="left:484px;top:506px;width:73px;height:18px;"></div>
<div class="fy" style="left:558px;top:506px;width:80px;height:18px;"></div>
<div class="fy" style="left:640px;top:506px;width:80px;height:18px;"></div>
<div class="fy" style="left:721px;top:506px;width:80px;height:18px;"></div>
<div style="left:803px;top:507px;width:21px;height:16px;background:#c0c0c0;border:1px solid #b9cbe6;border-radius:2px"><svg style="left:0;top:0" width="19" height="14" viewBox="0 0 19 14"><rect x="1" y="1" width="15.500" height="2.500" fill="#fff"/><path d="M1.500 1v2.800M16.500 1v2" stroke="#000" stroke-width="1"/><path d="M5 2l11 10M16 2l-11 10" stroke="#800000" stroke-width="3.200"/><path d="M5.300 2.300l10.400 9.400M15.700 2.300l-10.400 9.400" stroke="#f00000" stroke-width="2.300"/></svg></div>
<div class="f" style="left:25px;top:526px;width:60px;height:18px;"></div>
<div class="f" style="left:86px;top:526px;width:54px;height:18px;"></div>
<div class="fg" style="left:141px;top:526px;width:267px;height:18px;background:#f5f5f5"></div>
<div class="f" style="left:409px;top:526px;width:73px;height:18px;"></div>
<div class="f" style="left:484px;top:526px;width:73px;height:18px;"></div>
<div class="f" style="left:558px;top:526px;width:80px;height:18px;"></div>
<div class="f" style="left:640px;top:526px;width:80px;height:18px;"></div>
<div class="f" style="left:721px;top:526px;width:80px;height:18px;"></div>
<div style="left:803px;top:527px;width:21px;height:16px;background:#c0c0c0;border:1px solid #b9cbe6;border-radius:2px"><svg style="left:0;top:0" width="19" height="14" viewBox="0 0 19 14"><rect x="1" y="1" width="15.500" height="2.500" fill="#fff"/><path d="M1.500 1v2.800" stroke="#808080" stroke-width="1"/><path d="M5.300 2.300l10.400 9.400M15.700 2.300l-10.400 9.400" stroke="#929292" stroke-width="2.300"/></svg></div>
<div class="f" style="left:25px;top:546px;width:60px;height:18px;"></div>
<div class="f" style="left:86px;top:546px;width:54px;height:18px;"></div>
<div class="fg" style="left:141px;top:546px;width:267px;height:18px;background:#f5f5f5"></div>
<div class="f" style="left:409px;top:546px;width:73px;height:18px;"></div>
<div class="f" style="left:484px;top:546px;width:73px;height:18px;"></div>
<div class="f" style="left:558px;top:546px;width:80px;height:18px;"></div>
<div class="f" style="left:640px;top:546px;width:80px;height:18px;"></div>
<div class="f" style="left:721px;top:546px;width:80px;height:18px;"></div>
<div style="left:803px;top:547px;width:21px;height:16px;background:#c0c0c0;border:1px solid #b9cbe6;border-radius:2px"><svg style="left:0;top:0" width="19" height="14" viewBox="0 0 19 14"><rect x="1" y="1" width="15.500" height="2.500" fill="#fff"/><path d="M1.500 1v2.800" stroke="#808080" stroke-width="1"/><path d="M5.300 2.300l10.400 9.400M15.700 2.300l-10.400 9.400" stroke="#929292" stroke-width="2.300"/></svg></div>
<div class="f" style="left:25px;top:566px;width:60px;height:18px;"></div>
<div class="f" style="left:86px;top:566px;width:54px;height:18px;"></div>
<div class="fg" style="left:141px;top:566px;width:267px;height:18px;background:#f5f5f5"></div>
<div class="f" style="left:409px;top:566px;width:73px;height:18px;"></div>
<div class="f" style="left:484px;top:566px;width:73px;height:18px;"></div>
<div class="f" style="left:558px;top:566px;width:80px;height:18px;"></div>
<div class="f" style="left:640px;top:566px;width:80px;height:18px;"></div>
<div class="f" style="left:721px;top:566px;width:80px;height:18px;"></div>
<div style="left:803px;top:567px;width:21px;height:16px;background:#c0c0c0;border:1px solid #b9cbe6;border-radius:2px"><svg style="left:0;top:0" width="19" height="14" viewBox="0 0 19 14"><rect x="1" y="1" width="15.500" height="2.500" fill="#fff"/><path d="M1.500 1v2.800" stroke="#808080" stroke-width="1"/><path d="M5.300 2.300l10.400 9.400M15.700 2.300l-10.400 9.400" stroke="#929292" stroke-width="2.300"/></svg></div>
<div class="f" style="left:25px;top:586px;width:60px;height:18px;"></div>
<div class="f" style="left:86px;top:586px;width:54px;height:18px;"></div>
<div class="fg" style="left:141px;top:586px;width:267px;height:18px;background:#f5f5f5"></div>
<div class="f" style="left:409px;top:586px;width:73px;height:18px;"></div>
<div class="f" style="left:484px;top:586px;width:73px;height:18px;"></div>
<div class="f" style="left:558px;top:586px;width:80px;height:18px;"></div>
<div class="f" style="left:640px;top:586px;width:80px;height:18px;"></div>
<div class="f" style="left:721px;top:586px;width:80px;height:18px;"></div>
<div style="left:803px;top:587px;width:21px;height:16px;background:#c0c0c0;border:1px solid #b9cbe6;border-radius:2px"><svg style="left:0;top:0" width="19" height="14" viewBox="0 0 19 14"><rect x="1" y="1" width="15.500" height="2.500" fill="#fff"/><path d="M1.500 1v2.800" stroke="#808080" stroke-width="1"/><path d="M5.300 2.300l10.400 9.400M15.700 2.300l-10.400 9.400" stroke="#929292" stroke-width="2.300"/></svg></div>
<div class="f" style="left:25px;top:606px;width:60px;height:18px;"></div>
<div class="f" style="left:86px;top:606px;width:54px;height:18px;"></div>
<div class="fg" style="left:141px;top:606px;width:267px;height:18px;background:#f5f5f5"></div>
<div class="f" style="left:409px;top:606px;width:73px;height:18px;"></div>
<div class="f" style="left:484px;top:606px;width:73px;height:18px;"></div>
<div class="f" style="left:558px;top:606px;width:80px;height:18px;"></div>
<div class="f" style="left:640px;top:606px;width:80px;height:18px;"></div>
<div class="f" style="left:721px;top:606px;width:80px;height:18px;"></div>
<div style="left:803px;top:607px;width:21px;height:16px;background:#c0c0c0;border:1px solid #b9cbe6;border-radius:2px"><svg style="left:0;top:0" width="19" height="14" viewBox="0 0 19 14"><rect x="1" y="1" width="15.500" height="2.500" fill="#fff"/><path d="M1.500 1v2.800" stroke="#808080" stroke-width="1"/><path d="M5.300 2.300l10.400 9.400M15.700 2.300l-10.400 9.400" stroke="#929292" stroke-width="2.300"/></svg></div>
<div class="f" style="left:25px;top:626px;width:60px;height:18px;"></div>
<div class="f" style="left:86px;top:626px;width:54px;height:18px;"></div>
<div class="fg" style="left:141px;top:626px;width:267px;height:18px;background:#f5f5f5"></div>
<div class="f" style="left:409px;top:626px;width:73px;height:18px;"></div>
<div class="f" style="left:484px;top:626px;width:73px;height:18px;"></div>
<div class="f" style="left:558px;top:626px;width:80px;height:18px;"></div>
<div class="f" style="left:640px;top:626px;width:80px;height:18px;"></div>
<div class="f" style="left:721px;top:626px;width:80px;height:18px;"></div>
<div style="left:803px;top:627px;width:21px;height:16px;background:#c0c0c0;border:1px solid #b9cbe6;border-radius:2px"><svg style="left:0;top:0" width="19" height="14" viewBox="0 0 19 14"><rect x="1" y="1" width="15.500" height="2.500" fill="#fff"/><path d="M1.500 1v2.800" stroke="#808080" stroke-width="1"/><path d="M5.300 2.300l10.400 9.400M15.700 2.300l-10.400 9.400" stroke="#929292" stroke-width="2.300"/></svg></div>
<div style="left:473px;top:310px;width:417px;height:171px;background:#e9edf5;border:1px solid #4f6c9c;border-radius:5px"></div>
<div style="left:474px;top:311px;width:414px;height:20px;background:#2d80c4;border-radius:3px 3px 0 0"></div>
<span style="left:476.50px;top:315px;font-size:12px;line-height:15px;letter-spacing:0.019px;white-space:pre;color:#fff;">MSG_00012954 - Aviso</span>
<div style="left:873px;top:315px;width:12px;height:12px;background:#cfe4f7;border:1px solid #dcedfa"><svg style="left:0;top:0" width="10" height="10"><path d="M1.800 1.800l6.400 6.400M8.200 1.800l-6.400 6.400" stroke="#3a88c8" stroke-width="1.700"/></svg></div>
<svg style="left:505px;top:360px" width="40" height="38" viewBox="0 0 40 38"><path d="M5.500 10.600L29.400 3.300L36.300 26.500L13.100 33.800z" fill="#ffffc6"/><path d="M5.500 10.600L29.400 3.300M5.500 10.600L13.100 33.800" stroke="#7c7c7c" stroke-width="0.900" fill="none"/><path d="M29.400 3.300L36.300 26.500L13.100 33.800" stroke="#000" stroke-width="1.500" fill="none" stroke-linejoin="miter"/><path d="M15.500 8.500l2 1.800 1.800-2.800z" fill="#fff"/><circle cx="17.300" cy="6.600" r="1.700" fill="#3a3a3a"/><circle cx="16.300" cy="5.500" r="1.800" fill="#909090"/></svg>
<span style="left:576.70px;top:365px;font-size:12.3px;line-height:15px;letter-spacing:-0.027px;white-space:pre;color:#3e3e3e;">Foi Gerado o Agrupador com o Codigo 954398 Guarde</span>
<span style="left:576.70px;top:381px;font-size:12.3px;line-height:15px;letter-spacing:0.111px;white-space:pre;color:#3e3e3e;">Bem esse código, pois o mesmo será o de</span>
<span style="left:576.70px;top:397px;font-size:12.3px;line-height:15px;letter-spacing:0.056px;white-space:pre;color:#3e3e3e;">acompanhamento até o fim do processo!!</span>
<div style="left:824px;top:443px;width:55px;height:27px;background:#d5e4f4;border:2px solid #4a6a9a;border-radius:9px"><div style="left:8px;top:1px;width:35px;height:1px;background:repeating-linear-gradient(90deg,#303030 0 1.500px,transparent 1.500px 2.400px)"></div><div style="left:8px;top:20px;width:35px;height:1px;background:repeating-linear-gradient(90deg,#303030 0 1.500px,transparent 1.500px 2.400px)"></div></div>
<span style="left:843.00px;top:449px;font-size:12.5px;line-height:16px;letter-spacing:-1.263px;white-space:pre;color:#3a3a3a;"><u>O</u>K</span>
<div style="left:3px;top:669px;width:1042px;height:2px;background:#eef2f8"></div>
<div style="left:2px;top:671px;width:1043px;height:1px;background:#5f86b8"></div>
<div style="left:3px;top:672px;width:1042px;height:6px;background:#d0ddee"></div>
<div style="left:3px;top:680px;width:1042px;height:1px;background:#46608c"></div>
<div style="left:104px;top:672px;width:3px;height:6px;background:#fff"></div>
<div style="left:199px;top:672px;width:3px;height:6px;background:#fff"></div>
<div style="left:278px;top:672px;width:3px;height:6px;background:#fff"></div>
<div style="left:361px;top:672px;width:3px;height:6px;background:#fff"></div>
<div style="left:445px;top:672px;width:3px;height:6px;background:#fff"></div>
<div style="left:524px;top:672px;width:3px;height:6px;background:#fff"></div>
<div style="left:778px;top:672px;width:3px;height:6px;background:#fff"></div>
<div style="left:860px;top:672px;width:3px;height:6px;background:#fff"></div>
<div style="left:938px;top:672px;width:3px;height:6px;background:#fff"></div>
<div style="left:608px;top:671px;width:87px;height:7px;background:#fff"></div>
<div style="left:610px;top:671px;width:83px;height:7px;background:#b4d0ee;border-radius:4px 4px 0 0;border:1px solid #6f90bd;border-width:0 1px 0 1px"></div>
<div style="left:1022px;top:672px;width:23px;height:6px;background:#fff"></div>
<div style="left:1026px;top:675px;width:22px;height:3px;background:#d6e4f3;border:1px solid #a8bedc;border-bottom:0;border-radius:3px 0 0 0"></div>
<div style="left:3px;top:681px;width:1045px;height:30px;background:#e9edf5;border:1px solid #c0cfe6;border-top:0;border-radius:7px 0 0 0"></div>
<div style="left:8px;top:700px;width:1040px;height:1px;background:#c8d4e6"></div>
<span style="left:10.50px;top:703px;font-size:12px;line-height:15px;letter-spacing:-0.154px;white-space:pre;color:#202020;">Record: 1/1</span>
<div style="left:135px;top:702px;width:1px;height:5px;background:#505050"></div>
<div style="left:163px;top:702px;width:1px;height:5px;background:#505050"></div>
<div style="left:243px;top:702px;width:1px;height:5px;background:#505050"></div>
<div style="left:333px;top:702px;width:1px;height:5px;background:#505050"></div>
<div style="left:387px;top:702px;width:1px;height:5px;background:#505050"></div>
</body></html>
